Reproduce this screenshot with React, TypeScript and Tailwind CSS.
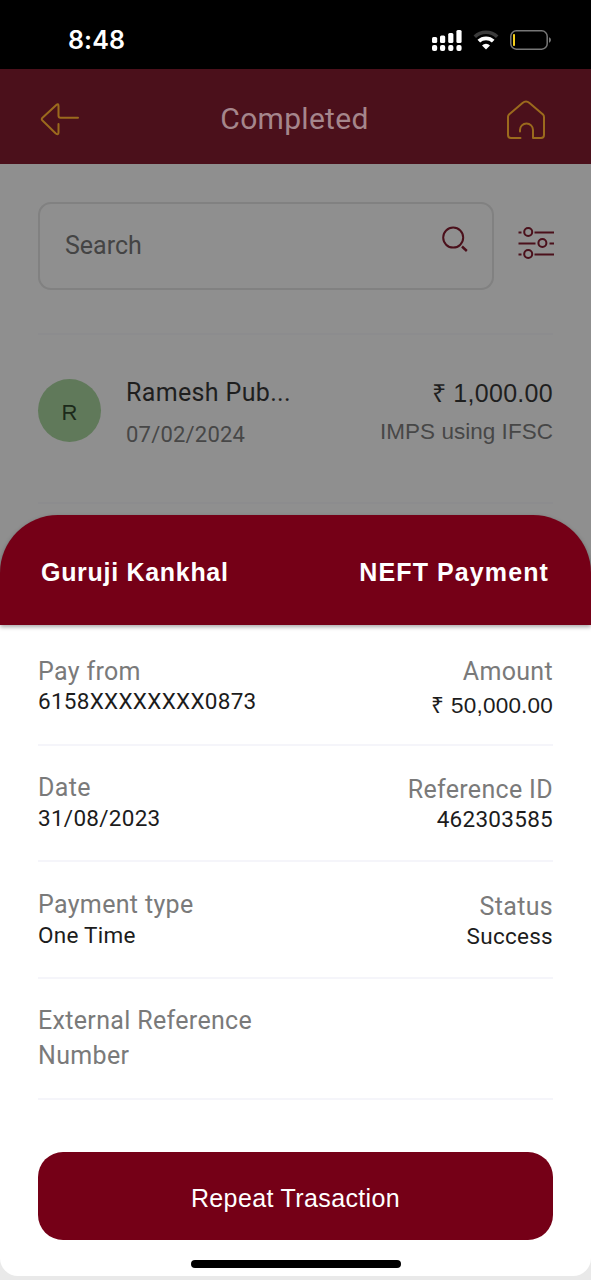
import type { ReactNode } from "react";

const SANS = "font-['Liberation_Sans',sans-serif]";

const StatusBar = () => (
  <div className="flex items-center justify-between h-[69px] pt-[11px] pl-[68px] pr-[39px] bg-black">
    <p className="font-['Inter',sans-serif] text-[25px] leading-[30px] tracking-[0.1px] font-semibold text-white">8:48</p>
    <div className="flex items-center">
      <svg width="30" height="21" viewBox="0 0 30 21" fill="#fff">
        <rect x="0" y="7" width="5.2" height="6" rx="1.5" />
        <rect x="8" y="5.5" width="5.2" height="7.5" rx="1.5" />
        <rect x="16.2" y="3" width="5.2" height="10" rx="1.5" />
        <rect x="24.4" y="0" width="5.2" height="13" rx="1.5" />
        <rect x="0" y="15" width="5.2" height="6" rx="2" />
        <rect x="8" y="15" width="5.2" height="6" rx="2" />
        <rect x="16.2" y="15" width="5.2" height="6" rx="2" />
        <rect x="24.4" y="15" width="5.2" height="6" rx="2" />
      </svg>
      <svg className="ml-[11px]" width="26" height="20" viewBox="0 0 26 20" fill="none">
        <path d="M1.8 6.8a16 16 0 0 1 22.4 0" stroke="#3b3b3b" strokeWidth="3.6" />
        <path d="M5.8 11.2a10.4 10.4 0 0 1 14.4 0" stroke="#fff" strokeWidth="3.8" />
        <path d="M13 19.5 9 15.4a5.8 5.8 0 0 1 8 0Z" fill="#fff" />
      </svg>
      <svg className="ml-[11px]" width="42" height="20" viewBox="0 0 42 20" fill="none">
        <rect x="0.8" y="0.8" width="36.4" height="18.4" rx="5.5" stroke="#777" strokeWidth="1.5" />
        <path d="M39 7.3c2.6.8 2.6 4.6 0 5.4Z" fill="#777" />
        <rect x="3" y="4" width="2" height="12" rx="0.8" fill="#f5cf1b" />
      </svg>
    </div>
  </div>
);

const Header = () => (
  <div className="flex items-center justify-between h-[95px] pt-1 pl-10 pr-[45px] bg-[#4b101b]">
    <svg width="40" height="34" viewBox="0 0 40 34" fill="none" stroke="#9b6a1d" strokeWidth="2" strokeLinecap="round" strokeLinejoin="round">
      <path d="M38 15.700H20.500q-2 0-2-2V4q0-3-2.200-1L2.500 15.800q-1.500 1.400 0 2.800L15.800 31.500q2.700 1.800 2.700-1V22" />
    </svg>
    <h1 className="ml-[3px] text-[30px] leading-9 tracking-[0.3px] text-[#a5868c]">Completed</h1>
    <svg className="mt-[3px]" width="40" height="40" viewBox="0 0 40 40" fill="none" stroke="#9b6a1d" strokeWidth="2" strokeLinecap="round" strokeLinejoin="round">
      <path d="M14.500 38H5q-3 0-3-3V17q0-1.500 1-2.500L16.500 3q3.500-3 7 0L37 14.500q1 1 1 2.500V35q0 3-3 3h-8v-8a6.500 6.500 0 0 0-13 0v1.500" />
    </svg>
  </div>
);

const SearchRow = () => (
  <div className="flex items-center">
    <div className="flex shrink-0 justify-between w-[456px] h-[88px] pl-[25px] pr-[23px] border-2 border-[#818181] rounded-[13px]">
      <p className="mt-[26px] text-[25px] leading-[32px] text-[#444]">Search</p>
      <svg className="mt-[22px]" width="28" height="28" viewBox="0 0 28 28" fill="none" stroke="#4b101b" strokeWidth="2">
        <circle cx="12.200" cy="11.600" r="10" />
        <path d="m21 20.500 4.800 4.500" strokeWidth="2.400" />
      </svg>
    </div>
    <svg className="shrink-0 ml-6 mb-1.5" width="36" height="34" viewBox="0 0 36 34" fill="none" stroke="#4b101b" strokeWidth="2">
      <circle cx="10.200" cy="6" r="4" />
      <circle cx="24.400" cy="17" r="4" />
      <circle cx="10.200" cy="28" r="4" />
      <path d="M0.500 6.500h3M16.500 6.500H36M0.500 17.500h17M31.500 17.500H36M0.500 28.500h3M16.500 28.500H36" />
    </svg>
  </div>
);

const TransactionRow = () => (
  <div className="flex h-[171px] pt-[43px] border-t-2 border-b-2 border-[#8c8c8e]">
    <div className={`flex items-center justify-center size-[63px] mt-px rounded-full bg-[#60795a] text-[22px] pt-1 text-[#1c2a1a] ${SANS}`}>
      R
    </div>
    <div className="ml-[25px] flex-1">
      <p className="text-[25px] leading-[30px] tracking-[0.35px] text-[#1f1f1f]">Ramesh Pub...</p>
      <p className="mt-[13px] text-[22px] leading-[28px] tracking-[0.2px] text-[#474747]">07/02/2024</p>
    </div>
    <div className={`text-right ${SANS}`}>
      <p className="text-[25px] leading-[30px] tracking-[0.3px] text-[#1f1f1f]">₹ 1,000.00</p>
      <p className="mt-[10px] text-[22.500px] leading-[28px] tracking-[0.03px] text-[#474747]">IMPS using IFSC</p>
    </div>
  </div>
);

const Label = ({ children }: { children: ReactNode }) => (
  <p className="text-[25px] leading-[34.500px] tracking-[0.33px] text-[#7a7a7a]">{children}</p>
);

const Value = ({ children }: { children: ReactNode }) => (
  <p className="-mt-px text-[22.500px] leading-[27px] tracking-[0.28px] text-[#1c1c1c]">{children}</p>
);

const details = [
  { left: ["Pay from", "6158XXXXXXXX0873"], right: ["Amount", "₹ 50,000.00"] },
  { left: ["Date", "31/08/2023"], right: ["Reference ID", "462303585"] },
  { left: ["Payment type", "One Time"], right: ["Status", "Success"] },
];

const DetailsSheet = () => (
  <div className="h-[765px]">
    <div className={`relative flex items-center justify-between h-[110px] pt-[6px] pl-[41px] pr-[41px] rounded-t-[58px] bg-[#750017] shadow-[0_2px_4px_rgba(0,0,0,0.35)] text-[25px] font-bold text-white ${SANS}`}>
      <p className="tracking-[0.7px]">Guruji Kankhal</p>
      <p className="mr-px tracking-[1.1px]">NEFT Payment</p>
    </div>
    <div className="h-[655px] bg-[#e9e9e9]">
      <div className="flex flex-col h-[651px] px-[38px] rounded-b-[18px] bg-white">
        {details.map(({ left, right }, i) => (
          <div
            key={left[0]}
            className={`flex justify-between border-b-2 border-[#f5f5fa] ${i === 0 ? "h-[121px] pt-[29.500px]" : i === 1 ? "h-[116px] pt-[25px]" : "h-[117px] pt-[26px]"}`}
          >
            <div>
              <Label>{left[0]}</Label>
              <Value>{left[1]}</Value>
            </div>
            <div className={i === 0 ? "text-right" : "text-right pt-[1.500px]"}>
              <Label>{right[0]}</Label>
              {i === 0 ? (
                <p className={`mt-[3px] text-[22.500px] leading-[27px] tracking-[0.2px] text-[#1c1c1c] ${SANS}`}>{right[1]}</p>
              ) : (
                <Value>{right[1]}</Value>
              )}
            </div>
          </div>
        ))}
        <div className="h-[121px] pt-[25px] border-b-2 border-[#f5f5fa]">
          <div className="w-[240px]">
            <Label>External Reference Number</Label>
          </div>
        </div>
        <button className={`mt-[52px] h-[88px] w-full pt-[6px] rounded-[25px] bg-[#750017] text-[25px] tracking-[0.37px] text-white ${SANS}`}>
          Repeat Trasaction
        </button>
        <div className="mt-[20px] mx-auto w-[210px] h-[8px] rounded-full bg-black" />
      </div>
    </div>
  </div>
);

const App = () => {
  return (
    <div className="w-[591px] h-[1280px] overflow-hidden bg-[#8f8f8f] font-['Roboto',sans-serif]">
      <StatusBar />
      <Header />
      <div className="h-[351px] px-[38px] pt-[38px]">
        <SearchRow />
        <div className="mt-[43px]">
          <TransactionRow />
        </div>
      </div>
      <DetailsSheet />
    </div>
  );
};

export default App;
